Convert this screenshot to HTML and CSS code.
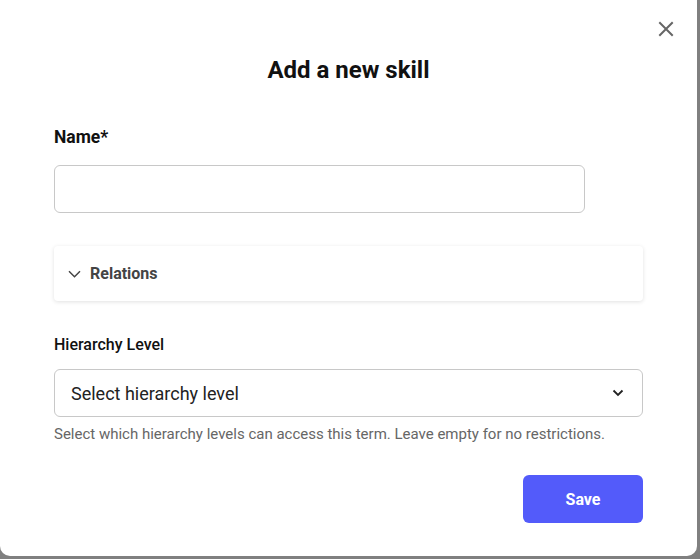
FILE: index.html
```html
<!DOCTYPE html>
<html lang="en">
<head>
    <meta charset="UTF-8">
    <meta name="viewport" content="width=device-width, initial-scale=1.0">
    <title>Add a new skill</title>
    <link rel="stylesheet" href="styles.css">
</head>
<body>

<div class="modal">
    <button class="close-btn" aria-label="Close">
        <svg width="16" height="16" viewBox="0 0 16 16"><path d="M2 2L14 14M14 2L2 14" stroke="#666" stroke-width="2" stroke-linecap="square"/></svg>
    </button>

    <h1 class="modal-title">Add a new skill</h1>

    <label class="field-label" for="skillName">Name*</label>
    <input type="text" id="skillName" class="text-input">

    <div class="accordion">
        <svg width="13" height="8" viewBox="0 0 13 8"><path d="M1 1.2L6.5 6.7L12 1.2" fill="none" stroke="#444" stroke-width="1.5"/></svg>
        <span>Relations</span>
    </div>

    <div class="small-label">Hierarchy Level</div>
    <div class="select-box">
        <span>Select hierarchy level</span>
        <svg width="12" height="8" viewBox="0 0 12 8"><path d="M1.5 1.5L6 6L10.5 1.5" fill="none" stroke="#222" stroke-width="1.8"/></svg>
    </div>
    <p class="help-text">Select which hierarchy levels can access this term. Leave empty for no restrictions.</p>

    <div class="actions">
        <button class="save-btn">Save</button>
    </div>
</div>

</body>
</html>
```

FILE: styles.css
```css
body {
    font-family: Roboto, 'Noto Sans', sans-serif;
    background-color: #808080;
    margin: 0;
    padding: 0;
}
.modal {
    position: relative;
    box-sizing: border-box;
    width: 697px;
    height: 556px;
    background: white;
    border-radius: 0 0 10px 10px;
    padding: 55px 54px 0 54px;
}
.close-btn {
    position: absolute;
    top: 21px;
    right: 23px;
    width: 16px;
    height: 16px;
    padding: 0;
    border: none;
    background: none;
    cursor: pointer;
}
.close-btn svg {
    display: block;
}
.modal-title {
    margin: 0;
    font-size: 24px;
    line-height: 30px;
    font-weight: 700;
    text-align: center;
    color: #111;
}
.field-label {
    display: block;
    margin-top: 40px;
    font-size: 17.5px;
    line-height: 24px;
    font-weight: 700;
    color: #111;
}
.text-input {
    display: block;
    box-sizing: border-box;
    width: 531px;
    height: 48px;
    margin-top: 16px;
    border: 1px solid #c8c8c8;
    border-radius: 6px;
    font-family: inherit;
    font-size: 16px;
}
.accordion {
    display: flex;
    align-items: center;
    gap: 9px;
    margin-top: 33px;
    height: 55px;
    padding: 0 14px;
    border-radius: 4px;
    box-shadow: 0 1px 4px rgba(0, 0, 0, 0.12);
    font-size: 16px;
    font-weight: 700;
    color: #444;
}
.small-label {
    margin-top: 34px;
    font-size: 16px;
    line-height: 20px;
    font-weight: 500;
    color: #111;
}
.select-box {
    display: flex;
    justify-content: space-between;
    align-items: center;
    box-sizing: border-box;
    height: 48px;
    margin-top: 14px;
    padding: 0 18px 0 16px;
    border: 1px solid #c8c8c8;
    border-radius: 6px;
    font-size: 18px;
    color: #222;
}
.help-text {
    margin: 7px 0 0;
    font-size: 15px;
    line-height: 20px;
    color: #666;
}
.actions {
    display: flex;
    justify-content: flex-end;
    margin-top: 31px;
}
.save-btn {
    width: 120px;
    height: 48px;
    background: #535bfa;
    color: white;
    border: none;
    border-radius: 6px;
    font-family: inherit;
    font-size: 16px;
    font-weight: 700;
    cursor: pointer;
}
```
